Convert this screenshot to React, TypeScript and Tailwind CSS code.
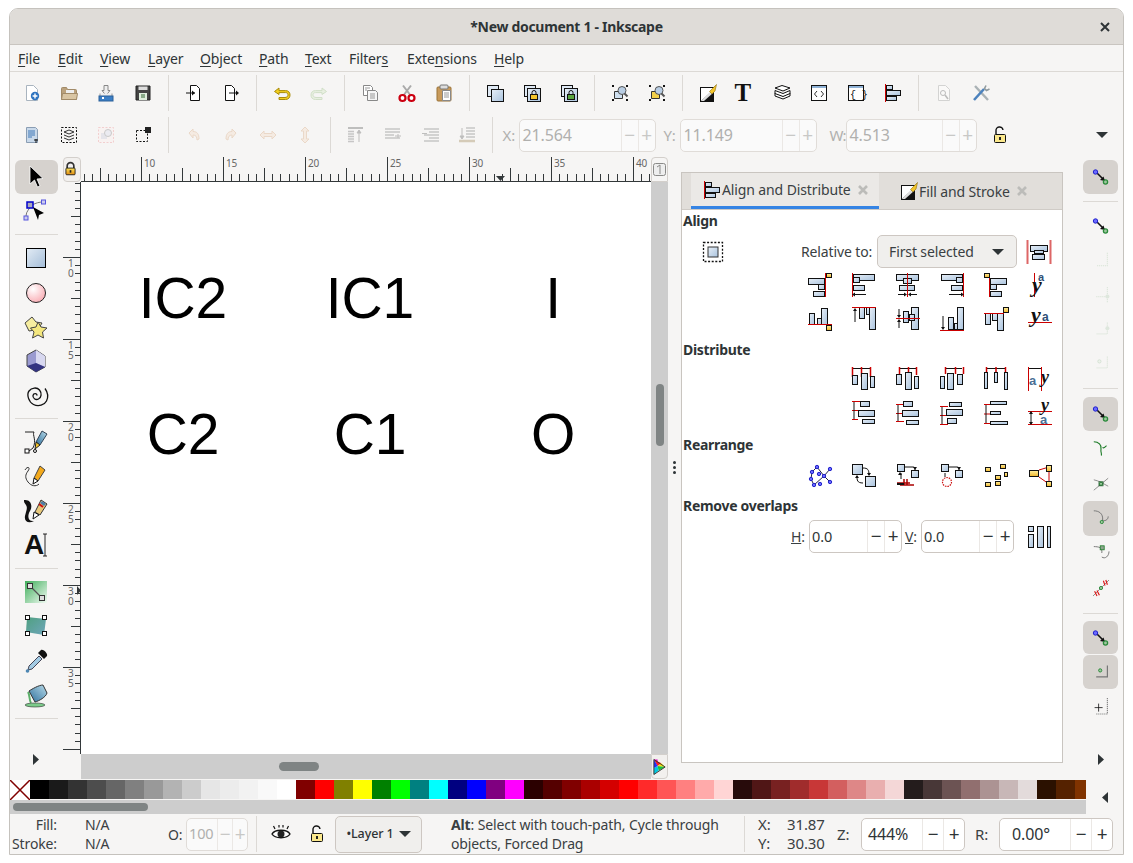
import React from "react";

const cx = (...a: string[]) => a.join(" ");
type K = { children?: React.ReactNode; s?: number; o?: number };
const S = ({ children, s = 18, o }: K) => (
  <svg width={s} height={s} viewBox={`0 0 ${s} ${s}`} opacity={o} className="block shrink-0 overflow-visible">{children}</svg>
);
const R = ({ x, y, w, h, f = "url(#gb)", st = "#111" }: { x: number; y: number; w: number; h: number; f?: string; st?: string }) => (
  <rect x={x + 0.5} y={y + 0.5} width={w - 1} height={h - 1} fill={f} stroke={st} />
);
const Red = ({ d, c = "#cc0000", w = 1 }: { d: string; c?: string; w?: number }) => <path d={d} stroke={c} strokeWidth={w} fill="none" />;
const Bl = ({ d }: { d: string }) => <path d={d} stroke="#111" fill="none" />;
const Y = ({ x, y, w = 6, h = 5 }: { x: number; y: number; w?: number; h?: number }) => <R x={x} y={y} w={w} h={h} f="url(#gy)" />;
const Tx = ({ x, y, c, z, f = "Liberation Serif", b = true, i = false, col = "#111" }: { x: number; y: number; c: string; z: number; f?: string; b?: boolean; i?: boolean; col?: string }) => (
  <text x={x} y={y} fontFamily={`'${f}', serif`} fontSize={z} fontWeight={b ? 700 : 400} fontStyle={i ? "italic" : "normal"} fill={col}>{c}</text>
);
const Head = ({ x, y, dir }: { x: number; y: number; dir: "l" | "r" | "u" | "d" }) => {
  const m = { l: `M${x} ${y}l3-2v4z`, r: `M${x} ${y}l-3-2v4z`, u: `M${x} ${y}l-2 3h4z`, d: `M${x} ${y}l-2-3h4z` };
  return <path d={m[dir]} fill="#111" />;
};

/* ---------- top toolbar icons ---------- */
const Page = ({ f = "#fff", st = "#999" }: { f?: string; st?: string }) => <path d="M3.5 1.5h7l4 4v11h-11z" fill={f} stroke={st} />;
const Lock = ({ s = 18, open = false }: { s?: number; open?: boolean }) => (
  <S s={18}>
    <g transform={`scale(${s / 18})`}>
      {open ? <path d="M5 8V5a3.5 3.5 0 0 1 7-1" fill="none" stroke="#111" strokeWidth="1.4" /> : <path d="M5 9V6a4 4 0 0 1 8 0v3" fill="none" stroke="#333" strokeWidth="2" />}
      <rect x="3.5" y="8.5" width="11" height="8" rx="1" fill={open ? "#fbe88c" : "url(#gl)"} stroke="#111" />
      <rect x="8" y="11" width="2" height="3" fill="#222" />
    </g>
  </S>
);
const I = {
  new: <S><Page st="#a9b4bf" /><circle cx="12" cy="12" r="4.2" fill="#2f74c0" /><path d="M12 9.6v4.8M9.6 12h4.8" stroke="#fff" strokeWidth="1.4" /></S>,
  open: <S><path d="M1.5 4.5a1 1 0 0 1 1-1h4l1 2h8a1 1 0 0 1 1 1v9h-15z" fill="#bba27d" stroke="#a18a68" /><rect x="6" y="6" width="8" height="3" fill="#eee" /><path d="M1.5 15.5l1-6h15l-1 6z" fill="#d9c5a3" stroke="#a18a68" /></S>,
  imp: <S><path d="M7 1.5h4v5h2l-4 5-4-5h2z" fill="#eee" stroke="#888" /><path d="M3 9.5v3h12v-3" fill="#eee" stroke="#999" /><rect x="2" y="12" width="14" height="5" fill="#3b7fc6" stroke="#2b6099" /><rect x="5" y="13" width="2" height="2" fill="#fff" /></S>,
  save: <S><path d="M2 2h14v14H2z" fill="#444" stroke="#222" /><rect x="4.5" y="2.5" width="9" height="3.5" fill="#ddd" /><rect x="5" y="9" width="8" height="7" fill="#dfeedd" /><rect x="7" y="10" width="4" height="4" fill="#8a8" /></S>,
  pin: <S><path d="M5.5 1.5h6l3 3v12h-9z" fill="#fff" stroke="#111" /><path d="M1 9h9" stroke="#111" /><path d="M10 9l-3-2.5v5z" fill="#111" /></S>,
  pout: <S><path d="M3.5 1.5h6l3 3v12h-9z" fill="#fff" stroke="#111" /><path d="M7 9h9" stroke="#111" /><path d="M17 9l-3-2.5v5z" fill="#111" /></S>,
  undo: <S><path d="M6 4L1.5 7.5 6 10.5V8.6h6.5c2 0 2.5 1.3 2.5 2.4S14 13.5 12 13.5H6V15.5h6.5c3 0 4.5-2 4.5-4.5s-1.5-4.4-4.5-4.4H6z" fill="#f2cf1e" stroke="#a88a08" /></S>,
  redo: <S o={0.35}><path d="M12 4l4.5 3.5L12 10.5V8.6H5.5C3.5 8.6 3 9.9 3 11s1 2.5 3 2.5h6v2H5.5c-3 0-4.5-2-4.5-4.5s1.500-4.4 4.5-4.4H12z" fill="#cfe6bd" stroke="#8eb978" /></S>,
  copy: <S><path d="M2.500 1.500h7l2 2v8h-9z" fill="#fff" stroke="#888" /><path d="M6.500 6.500h8l2 2v8h-10z" fill="#f6f6f6" stroke="#888" /><path d="M4 4h5M4 6h2M9 10h5M9 12h5M9 14h5" stroke="#999" /></S>,
  cut: <S><path d="M5 12L13 1.500M13 12L5 1.500" stroke="#aaa" strokeWidth="2" /><circle cx="4.500" cy="14" r="3" fill="#fff" stroke="#c01" strokeWidth="2.200" /><circle cx="13.500" cy="14" r="3" fill="#fff" stroke="#c01" strokeWidth="2.200" /></S>,
  paste: <S><rect x="2" y="3" width="14" height="14" rx="1" fill="#c89a5b" stroke="#9a7237" /><rect x="5" y="1" width="8" height="4" rx="1" fill="#ddd" stroke="#777" /><path d="M7.500 6.500h8v10h-8z" fill="#fff" stroke="#888" /><path d="M9 9h5M9 11h5M9 13h5" stroke="#999" /></S>,
  dup: <S><rect x="1.500" y="1.500" width="11" height="11" fill="#dfe9f4" stroke="#111" /><rect x="5.500" y="5.500" width="12" height="12" fill="url(#gb)" stroke="#111" /></S>,
  clone: <S><rect x="1.500" y="1.500" width="11" height="11" fill="#dfe9f4" stroke="#111" /><rect x="4.500" y="4.500" width="13" height="13" fill="url(#gb)" stroke="#111" /><path d="M9 10V8.500a2 2 0 0 1 4 0V10" stroke="#111" fill="none" /><rect x="7.500" y="10.500" width="7" height="5" fill="#f3c52b" stroke="#111" /></S>,
  unl: <S><rect x="1.500" y="1.500" width="11" height="11" fill="#dfe9f4" stroke="#111" /><rect x="4.500" y="4.500" width="13" height="13" fill="url(#gb)" stroke="#111" /><path d="M9 10V8.500a2 2 0 0 1 4 0V10" stroke="#111" fill="none" /><rect x="7.500" y="10.500" width="7" height="5" fill="#5aa53f" stroke="#111" /></S>,
  grp: (c: string) => <S><path d="M1 1h2v2H1zM15 15h2v2h-2zM1 15h2v2H1zM15 1h2v2h-2z" fill="#111" /><path d="M3.500 7.500h8v7h-8z" fill={c} stroke="#333" /><circle cx="11" cy="6.500" r="4" fill="#b9cde3" stroke="#555" /><path d="M13.500 9.500l3 3" stroke="#555" strokeWidth="2" /></S>,
  fs: <S><rect x="1.500" y="3.500" width="13" height="14" fill="#fff" stroke="#111" /><path d="M2 17L14 17V6z" fill="#111" /><path d="M2 17L12 7l2 2-9 8z" fill="#ddd" /><path d="M17.500 .5l-7 7 2.500 2.500 3-3z" fill="#f3c52b" stroke="#8a6d10" strokeWidth=".6" /></S>,
  text: <S s={18}><Tx x={-1.5} y={17} c="T" z={25} /></S>,
  layers: <S><path d="M2 9l8 3 7-3v3l-7 3-8-3z" fill="#fff" stroke="#111" /><path d="M2 6.500l8 3 7-3v3l-7 3-8-3z" fill="#fff" stroke="#111" /><path d="M2 4l7-2.500 8 2.500-7 3z" fill="#fff" stroke="#111" /></S>,
  xml: <S><rect x="1.500" y="1.500" width="15" height="15" fill="#fff" stroke="#111" /><rect x="2" y="2" width="14" height="2" fill="#8fb2d6" /><path d="M7 7L4.500 10 7 13M11 7l2.500 3L11 13" stroke="#333" fill="none" /></S>,
  css: <S><rect x="1.500" y="1.500" width="15" height="15" fill="#fff" stroke="#111" /><rect x="2" y="2" width="14" height="2" fill="#8fb2d6" /><Tx x={3} y={13.500} c="{ }" z={10} f="Liberation Mono" b={false} /></S>,
  align: <S><Red d="M1.500 0v18" /><R x={2} y={1} w={7} h={5} /><R x={2} y={6} w={15} h={6} /><R x={2} y={12} w={11} h={5} /></S>,
  dp: <S o={0.45}><path d="M3.500 1.500h7l4 4v11h-11z" fill="#fff" stroke="#aaa" /><circle cx="8" cy="9" r="2.500" fill="none" stroke="#777" /><path d="M10 11l3 4" stroke="#777" strokeWidth="1.500" /></S>,
  tools: <S><path d="M3 2l13 14" stroke="#aab2b5" strokeWidth="2.400" /><path d="M2 16L12 5" stroke="#4c82bd" strokeWidth="2.600" /><path d="M14 1.500l-1.500 3 2 2 3-1.500" stroke="#8f9a9e" strokeWidth="1.600" fill="none" /></S>,
  doc: <S><path d="M3.500 1.500h9l2 2v13h-11z" fill="#c9d9ea" stroke="#8a9db3" /><path d="M5 5h7M5 7h7M5 9h7M5 11h4" stroke="#3d77b7" /><path d="M11 14h4M13 13v4" stroke="#111" /></S>,
  selall: <S><rect x="1.500" y="1.500" width="15" height="15" fill="none" stroke="#111" strokeDasharray="2 1.500" /><path d="M4 6l5-2 5 2-5 2zM4 9l5 2 5-2M4 12l5 2 5-2" stroke="#333" fill="none" /></S>,
  selz: <S o={0.4}><rect x="1.500" y="1.500" width="15" height="15" fill="#fbeeee" stroke="#e99" strokeDasharray="2 1.500" /><path d="M4 7h6v6H4z" fill="#ccd" /><circle cx="11" cy="7" r="3.500" fill="#dde" stroke="#888" /></S>,
  sq: <S><rect x="2.500" y="4.500" width="11" height="11" fill="none" stroke="#111" strokeDasharray="2 1.500" /><rect x="11" y="1" width="6" height="6" fill="#222" /></S>,
  rotl: <S o={0.7}><path d="M4 7l4-4v2.500c4 0 6 2.500 6 7.500l-2 1c0-3-1-5-4-5V12z" fill="#f5e7db" stroke="#e6cdb6" /></S>,
  rotr: <S o={0.7}><path d="M14 7l-4-4v2.500c-4 0-6 2.500-6 7.500l2 1c0-3 1-5 4-5V12z" fill="#f5e7db" stroke="#e6cdb6" /></S>,
  flh: <S o={0.7}><path d="M1 9l4-4v2.500h8V5l4 4-4 4v-2.500H5V13z" fill="#f5e7db" stroke="#e6cdb6" /></S>,
  flv: <S o={0.7}><path d="M9 1l4 4h-2.500v8H13l-4 4-4-4h2.500V5H5z" fill="#f5e7db" stroke="#e6cdb6" /></S>,
  rtop: <S o={0.5}><path d="M1 2h15" stroke="#888" strokeWidth="2" /><path d="M1 5.500h6M1 8h6M1 10.500h6M1 13h6M1 15.500h6" stroke="#999" strokeWidth="1.500" /><path d="M12 16V5M12 4l-2 3h4z" stroke="#888" fill="#888" /></S>,
  rup: <S o={0.5}><path d="M1 3h15M1 6h15M1 9h9M1 12h15" stroke="#999" strokeWidth="1.500" /><path d="M14 12V8M11 10h6" stroke="#888" /></S>,
  rdn: <S o={0.5}><path d="M3 3h15M8 6h10M3 9h15M8 12h10M3 15h15" stroke="#999" strokeWidth="1.500" /><path d="M1 7.500h5" stroke="#888" /></S>,
  rbot: <S o={0.5}><path d="M8 2h9M8 5h9M8 8h9M8 11h9" stroke="#999" strokeWidth="1.500" /><path d="M1 15h16" stroke="#b5a27e" strokeWidth="2.500" /><path d="M4 2v10M4 13l-2-3h4z" stroke="#888" fill="#888" /></S>,
};

/* ---------- left toolbar icons ---------- */
const L = {
  sel: <S s={24}><path d="M6 1l0 18 4.500-4 3 7 2.500-1-3-7 6-.5z" fill="#000" stroke="#fff" strokeWidth=".8" /></S>,
  node: <S s={24}><path d="M7 6C6 10 2 12 2 17M8 6c4-2 7-3 11-3" fill="none" stroke="#777" /><rect x="3" y="3" width="6" height="6" fill="#aab" stroke="#00c" strokeWidth="1.500" /><rect x="17.500" y="1" width="4" height="4" fill="#cce" stroke="#55d" /><rect x="0" y="17" width="4" height="4" fill="#cce" stroke="#55d" /><path d="M9 8l11 6-5 2 -1 5z" fill="#000" /></S>,
  rect: <S s={24}><rect x="2.500" y="2.500" width="19" height="19" fill="url(#gr)" stroke="#000" strokeWidth="1" /></S>,
  circ: <S s={24}><circle cx="12" cy="12" r="9.500" fill="url(#gc)" stroke="#222" /></S>,
  star: <S s={24}><path d="M8 2L1 8l4 8 6-1 4-2 3-5-6-1z" fill="#f7eea0" stroke="#444" /><path d="M14 7l3 5 6 1-4.500 4 1 6-5.500-3-5.500 3 1.500-6-3.500-4 5.500-1z" fill="#f4e77e" stroke="#444" /></S>,
  box: <S s={24}><path d="M12 1l9 6v11l-9 5-9-6V6z" fill="#9a9ad0" stroke="#444" /><path d="M12 1l9 6v11l-9-4z" fill="#d8d8f0" /><path d="M3 17l9-3 9 4-9 5z" fill="#333380" /></S>,
  spiral: <S s={24}><path d="M13 12.500c0-2.500-3.500-2.500-4 0s2.500 5 5.500 3.500 3.500-6 1-9-8-2.500-10.500 1-.5 11 4.500 13.500 11 .5 13-3.500 1-9-1.500-12.500" fill="none" stroke="#111" strokeWidth="1.300" /></S>,
  pen: <S s={24}><path d="M1 2h9C8 5 13 10 9 18l-4 3" fill="none" stroke="#222" /><path d="M18 1l5 3-7 11-4-3z" fill="url(#gm2)" stroke="#345" /><path d="M12 12l4 3-5 4z" fill="#f3c52b" stroke="#222" /><rect x="1" y="19" width="4" height="4" fill="#fff" stroke="#111" /><circle cx="11" cy="21" r="1.500" fill="#fff" stroke="#111" /></S>,
  pencil: <S s={24}><path d="M1 5c2-4 6-3 3 1s-3 7 0 11 8 5 11 2" fill="none" stroke="#333" /><path d="M16 1l5 4-7 11-4-3z" fill="#f3a91c" stroke="#444" /><path d="M10 13l4 3-5 3z" fill="#fff" stroke="#111" /></S>,
  call: <S s={24}><path d="M0 1c7-1 9 6 6 11s-2 11 4 10c-6 3-10 0-9-5s3-8 1-11-2-3-2-5z" fill="#111" /><path d="M17 1l6 4-7 11-5-3z" fill="#e8c87a" stroke="#333" /><path d="M18 2l4 3-2 2-4-3z" fill="#4d7ea8" /><path d="M15 5l4 3" stroke="#c11" strokeWidth="2" /><path d="M10 13l5 3-6 4z" fill="#fff" stroke="#111" /></S>,
  A: <S s={24}><Tx x={0} y={21} c="A" z={28} f="Liberation Sans" /><path d="M19 1h4M21 1v22M19 23h4" stroke="#111" strokeWidth=".9" /></S>,
  grad: <S s={24}><rect x="1" y="1" width="22" height="22" fill="url(#gg)" /><path d="M6 6l12 12" stroke="#555" strokeWidth="1.200" /><rect x="3.500" y="3.500" width="5" height="5" fill="#ddd" stroke="#333" /><rect x="15.500" y="15.500" width="5" height="5" fill="#ddd" stroke="#333" /></S>,
  mesh: <S s={24}><path d="M3 3l19 2-2 16L2 18z" fill="url(#gm)" /><g fill="#fff" stroke="#111"><rect x="1.500" y="1.500" width="4" height="4" /><rect x="18.500" y="1.500" width="4" height="4" /><rect x="1.500" y="17.500" width="4" height="4" /><rect x="18.500" y="17.500" width="4" height="4" /></g></S>,
  drop: <S s={24}><path d="M15 7L5 17l-1 4 4-1 10-10z" fill="#a3cbe4" stroke="#445" /><path d="M14 4l6 6 3-3c1-2-3-7-6-6z" fill="#111" /><circle cx="3.500" cy="22" r="1.800" fill="#4d87b3" /></S>,
  bucket: <S s={24}><path d="M4 9c2 3 1 8 3 11" fill="none" stroke="#5cb06a" strokeWidth="2" /><path d="M5 8c3-2 10-6 14-6l4 8c-1 4-8 8-12 9z" fill="url(#gm2)" stroke="#333" /><ellipse cx="11" cy="22" rx="10" ry="2" fill="#7ccb8a" stroke="#333" strokeWidth=".6" /></S>,
};

/* ---------- snap icons (right toolbar) ---------- */
const Snap = ({ o }: { o?: number }) => (
  <S s={24} o={o}>
    <path d="M7 7l8 8" stroke="#111" strokeWidth="1.600" />
    <path d="M16 16l-5-1 3.500-3.500z" fill="#111" />
    <circle cx="6.500" cy="7" r="2.200" fill="#6a6aff" stroke="#2222cc" />
    <circle cx="16.500" cy="17" r="2.100" fill="#9ec79e" stroke="#2a8a3a" strokeWidth="1.300" />
  </S>
);
const Dot = ({ x, y, b = false }: { x: number; y: number; b?: boolean }) => <circle cx={x} cy={y} r={2} fill={b ? "#6a6aff" : "#9ec79e"} stroke={b ? "#2222cc" : "#2a8a3a"} strokeWidth="1.200" />;
const Sm = ({ children }: { children: React.ReactNode }) => <div className="scale-[0.8]">{children}</div>;
const Rr = {
  p1: <S s={24} o={0.3}><path d="M20 3v16H6" stroke="#a9c9a9" strokeWidth="1.500" strokeDasharray="1.500 1" fill="none" /></S>,
  p2: <S s={24} o={0.3}><path d="M20 2v20M6 14h14" stroke="#a9c9a9" strokeWidth="1.500" strokeDasharray="1.500 1" fill="none" /><circle cx="20" cy="14" r="2.500" fill="#a9c9a9" /></S>,
  p3: <S s={24} o={0.3}><path d="M20 4v14H6" stroke="#a9c9a9" strokeWidth="1.500" strokeDasharray="1.500 1" fill="none" /><circle cx="20" cy="11" r="2.500" fill="#a9c9a9" /></S>,
  p4: <S s={24} o={0.3}><path d="M20 4v14H6" stroke="#a9c9a9" strokeWidth="1.500" strokeDasharray="1.500 1" fill="none" /><circle cx="10" cy="10" r="2" fill="#dfeedd" stroke="#7a7" /></S>,
  c1: <S s={24}><path d="M3 3c6 0 10 4 9 9s2 7 0 8" fill="none" stroke="#1a7a25" strokeWidth="1.400" /><path d="M14 10c2 2 3-1 5-2" fill="none" stroke="#1a7a25" strokeWidth="1.400" /></S>,
  c2: <S s={24}><path d="M3 21L21 6M3 8c6 1 12 5 18 8" stroke="#777" fill="none" /><Dot x={12} y={13} /><rect x="9.500" y="10.500" width="5" height="5" fill="none" stroke="#1a5a25" /></S>,
  c3: <S s={24}><path d="M3 3c6 0 12 3 11 12M21 10c0 5-5 6-7 5" fill="none" stroke="#777" strokeWidth="1.200" /><Dot x={13} y={17} /></S>,
  c4: <S s={24}><path d="M3 4c6 0 11 1 10 8M22 10c0 6-5 10-9 7" fill="none" stroke="#777" strokeWidth="1.200" /><rect x="10" y="2" width="5" height="5" fill="#8fa58f" stroke="#1a7a25" transform="translate(1 1)" /></S>,
  c5: <S s={24}><path d="M2 22L22 2" stroke="#777" /><path d="M4 16l3 6M7 15l3 6M15 3l2 6M18 2l2 6" stroke="#d11" strokeWidth="1.400" /><Dot x={12} y={12} /></S>,
  b1: <S s={24}><path d="M20 4v14H6" stroke="#777" strokeWidth="1.500" fill="none" /><Dot x={11} y={10} /></S>,
  b2: <S s={24}><path d="M20 2v20H6" stroke="#888" strokeWidth="1.500" strokeDasharray="1.500 1" fill="none" /><path d="M4 14h10M9 9v10" stroke="#111" /></S>,
};

/* ---------- Align panel icons ---------- */
const A1 = {
  a: <S s={24}><R x={0} y={5} w={17} h={7} /><R x={10} y={11} w={7} h={6} /><R x={5} y={18} w={12} h={6} /><Red d="M17.500 0v24" /><Y x={18} y={0} /></S>,
  b: <S s={24}><R x={1} y={1} w={22} h={7} /><R x={1} y={4} w={7} h={6} /><R x={1} y={12} w={12} h={6} /><Red d="M.5 0v24" /><Bl d="M2 21.500h12" /><Head x={0} y={21.500} dir="l" /></S>,
  c: <S s={24}><R x={0} y={1} w={23} h={7} /><R x={7} y={5} w={9} h={6} /><R x={3} y={12} w={16} h={6} /><Red d="M11.500 0v24" /><Bl d="M2 21.500h7M14 21.500h7" /><Head x={11} y={21.500} dir="r" /><Head x={12} y={21.500} dir="l" /></S>,
  d: <S s={24}><R x={1} y={1} w={22} h={7} /><R x={16} y={4} w={7} h={6} /><R x={11} y={12} w={12} h={6} /><Red d="M23.500 0v24" /><Bl d="M9 21.500h12" /><Head x={24} y={21.500} dir="r" /></S>,
  e: <S s={24}><R x={6} y={5} w={17} h={7} /><R x={6} y={11} w={7} h={6} /><R x={6} y={18} w={12} h={6} /><Red d="M5.500 0v24" /><Y x={0} y={0} /></S>,
  f: <S s={24}><Red d="M6.500 0v24" /><Tx x={10} y={8} c="a" z={11} f="Liberation Sans" col="#2f4f77" /><Tx x={4} y={19} c="y" z={22} i /></S>,
  g: <S s={24}><R x={1} y={6} w={6} h={12} /><R x={9} y={11} w={6} h={7} /><R x={13} y={1} w={7} h={17} /><Red d="M0 17.500h24" /><Y x={18} y={18} w={6} h={6} /></S>,
  h: <S s={24}><R x={7} y={0} w={6} h={12} /><R x={14} y={0} w={6} h={8} /><R x={17} y={0} w={7} h={23} /><Red d="M0 .5h24" /><Bl d="M3 3v12" /><Head x={3} y={1} dir="u" /></S>,
  i: <S s={24}><R x={7} y={4} w={6} h={12} /><R x={15} y={0} w={8} h={23} /><R x={13} y={7} w={6} h={7} /><Red d="M0 11.500h24" /><Bl d="M3 2v7M3 14v7" /><Head x={3} y={11} dir="d" /><Head x={3} y={12} dir="u" /></S>,
  j: <S s={24}><R x={8} y={10} w={6} h={13} /><R x={14} y={16} w={7} h={7} /><R x={17} y={0} w={7} h={23} /><Red d="M0 23.500h24" /><Bl d="M3 9v12" /><Head x={3} y={23} dir="d" /></S>,
  k: <S s={24}><R x={1} y={6} w={6} h={12} /><R x={8} y={6} w={7} h={8} /><R x={13} y={6} w={7} h={18} /><Red d="M0 6.500h20" /><Y x={19} y={0} w={6} h={6} /></S>,
  l: <S s={24}><Red d="M0 15.500h24" /><Tx x={3} y={15} c="y" z={22} i /><Tx x={14} y={14} c="a" z={12} f="Liberation Sans" col="#2f4f77" /></S>,
};
const tickBar = (a: number, b: number) => <><Bl d={`M${a} 1.500h${b - a}`} /></>;
const D1 = {
  a: <S s={24}>{tickBar(1, 18)}<Red d="M.5 0v10M9.500 0v10M18.500 0v10" w={1.500} /><R x={0} y={8} w={6} h={10} /><R x={9} y={6} w={7} h={17} /><R x={18} y={9} w={5} h={12} /></S>,
  b: <S s={24}>{tickBar(4, 20)}<Red d="M3.500 0v8M12.500 0v8M20.500 0v8" w={1.500} /><R x={0} y={7} w={6} h={11} /><R x={9} y={5} w={7} h={18} /><R x={18} y={9} w={5} h={13} /></S>,
  c: <S s={24}>{tickBar(6, 22)}<Red d="M5.500 0v7M15.500 0v7M23.500 0v7" w={1.500} /><R x={0} y={9} w={5} h={13} /><R x={7} y={6} w={7} h={17} /><R x={17} y={7} w={6} h={11} /></S>,
  d: <S s={24}>{tickBar(3, 21)}<Red d="M2.500 0v5M12 0v5M21.500 0v5" w={1.500} /><R x={0} y={5} w={4} h={17} /><R x={10} y={5} w={4} h={11} /><R x={20} y={5} w={4} h={18} /></S>,
  e: <S s={24}><Bl d="M1 1.500h12" /><Red d="M.5 0v24M13.500 0v24" /><Tx x={1} y={18} c="a" z={13} f="Liberation Sans" col="#4a6f96" /><Tx x={13} y={16} c="y" z={18} i /></S>,
  f: <S s={24}><Red d="M0 .5h8M0 9.500h8M0 18.500h6" w={1.200} /><Bl d="M2 1v17" /><R x={8} y={0} w={10} h={6} /><R x={6} y={9} w={17} h={7} /><R x={10} y={18} w={13} h={5} /></S>,
  g: <S s={24}><Red d="M0 3.500h8M0 12.500h8M0 20.500h8" w={1.200} /><Bl d="M2 4v16" /><R x={7} y={0} w={10} h={6} /><R x={6} y={9} w={17} h={7} /><R x={10} y={19} w={13} h={5} /></S>,
  h: <S s={24}><Red d="M0 5.500h8M0 14.500h8M0 23.500h8" w={1.200} /><Bl d="M2 6v17" /><R x={9} y={1} w={13} h={5} /><R x={6} y={8} w={17} h={7} /><R x={7} y={17} w={10} h={6} /></S>,
  i: <S s={24}><Red d="M0 3.500h6M0 13h6M0 22.500h6" w={1.200} /><Bl d="M2 4v18" /><R x={6} y={0} w={17} h={4} /><R x={6} y={10} w={11} h={4} /><R x={6} y={20} w={18} h={4} /></S>,
  j: <S s={24}><Red d="M0 10.500h24M0 23.500h24" /><Bl d="M3 11v12" /><Head x={3} y={10} dir="u" /><Head x={3} y={24} dir="d" /><Tx x={13} y={10} c="y" z={18} i /><Tx x={12} y={23} c="a" z={13} f="Liberation Sans" col="#4a6f96" /></S>,
};
const Q = ({ x, y, s = 10 }: { x: number; y: number; s?: number }) => <R x={x} y={y} w={s} h={s} />;
const E1 = {
  a: <S s={24}><path d="M4 8L9 3l7 9-10 9-3-6zM16 12l6-7M16 12l6 6" fill="none" stroke="#224" /><g fill="#6a6aff" stroke="#2222cc">{[[9, 3], [4, 8], [3, 15], [6, 21], [12, 20], [16, 12], [11, 10], [22, 5], [22, 18]].map(([x, y], i) => <circle key={i} cx={x} cy={y} r="1.700" />)}</g></S>,
  b: <S s={24}><Q x={0} y={0} s={11} /><Q x={13} y={12} s={11} /><path d="M11 4c5 0 6 2 6 7M11 19c-6 0-6-3-6-7" fill="none" stroke="#111" /><Head x={17} y={12} dir="d" /><Head x={5} y={11} dir="u" /></S>,
  c: <S s={24}><Q x={1} y={0} s={8} /><Q x={15} y={6} s={8} /><path d="M9 3h8c2 0 2 1 2 3" fill="none" stroke="#111" /><Head x={19} y={6} dir="d" /><Head x={4} y={8} dir="u" /><path d="M5 9v6" stroke="#111" /><path d="M1 19h13M4 21h14M8 15v6M11 15v6" stroke="#a00" strokeWidth="1.500" /><path d="M1 20h7" stroke="#111" strokeWidth="2" /></S>,
  d: <S s={24}><Q x={1} y={0} s={8} /><Q x={15} y={6} s={8} /><path d="M9 3h8c2 0 2 1 2 3" fill="none" stroke="#111" /><Head x={19} y={6} dir="d" /><circle cx="7" cy="18" r="4.500" fill="none" stroke="#c11" strokeDasharray="1.500 1" strokeWidth="1.200" /><path d="M5 9v4" stroke="#111" /></S>,
  e: <S s={24}><Y x={1} y={3} w={6} h={5} /><Y x={16} y={0} w={6} h={5} /><Y x={11} y={11} w={6} h={5} /><Y x={20} y={8} w={4} h={5} /><Y x={1} y={18} w={6} h={5} /><Y x={11} y={17} w={6} h={5} /></S>,
  f: <S s={24}><Red d="M11 6l10-3M11 13l10 7M21 7v11" /><Y x={1} y={6} w={10} h={7} /><Y x={18} y={1} w={6} h={7} /><Y x={18} y={17} w={6} h={6} /></S>,
  rm: <S s={24}><R x={1} y={1} w={6} h={6} /><R x={1} y={9} w={6} h={14} /><R x={10} y={1} w={7} h={22} /><R x={20} y={1} w={4} h={22} /></S>,
  sel: <S s={24}><rect x="2.500" y="2.500" width="19" height="19" fill="none" stroke="#111" strokeWidth="1.300" strokeDasharray="2 1.600" /><rect x="7" y="7" width="10" height="10" fill="url(#gb)" stroke="#333" /></S>,
  rel: <S s={24}><path d="M.5 0v24M23.500 0v24" stroke="#d66" strokeWidth="2" /><R x={3} y={5} w={18} h={7} /><R x={7} y={10} w={10} h={4} /><R x={5} y={14} w={13} h={6} /></S>,
  eye: <S s={22}><path d="M2 11c3-5 15-5 18 0-3 5-15 5-18 0z" fill="#fff" stroke="#111" strokeWidth="1.400" /><circle cx="11" cy="11" r="3.500" fill="#222" /><path d="M5 6L3.500 3M9 4.500V2M13 4.500V2M17 6l1.500-3" stroke="#111" strokeWidth="1.200" /></S>,
};

const X = () => <svg width="12" height="12" viewBox="0 0 12 12" className="shrink-0"><path d="M2 2l8 8M10 2l-8 8" stroke="#bcbcb9" strokeWidth="2.600" /></svg>;
const Tri = () => <svg width="12" height="6" viewBox="0 0 12 6" className="shrink-0"><path d="M0 0h12L6 6z" fill="#2e3436" /></svg>;

/* ---------- rulers ---------- */
const TopRuler = () => {
  const xs: React.ReactNode[] = [];
  for (let i = -7; i <= 70; i++) {
    const x = 141 - 81 + i * 8.2;
    if (x < 0 || x > 570) continue;
    const px = Math.round(x) + 0.5;
    const h = i % 10 === 0 ? 24 : i % 5 === 0 ? 13 : 7;
    xs.push(<path key={i} d={`M${px} 24V${24 - h}`} stroke="#33383a" />);
  }
  const labels = [10, 15, 20, 25, 30, 35, 40];
  return (
    <svg width="570" height="25" viewBox="0 0 570 25" className="block">
      {xs}
      {labels.map((l, i) => <text key={l} x={60 + i * 82 + 3} y={9.500} fontSize="10" fill="#666" fontFamily="'Noto Sans', sans-serif">{l}</text>)}
      <path d="M0 24.500h570" stroke="#33383a" />
      <path d="M415 19h9l-4.500 5z" fill="#33383a" />
    </svg>
  );
};
const LeftRuler = () => {
  const ys: React.ReactNode[] = [];
  for (let i = -10; i <= 60; i++) {
    const y = 256 - 181 + i * 8.2;
    if (y < 0 || y > 572) continue;
    const py = Math.round(y) + 0.5;
    const h = i % 10 === 0 ? 18 : i % 5 === 0 ? 10 : 6;
    ys.push(<path key={i} d={`M19 ${py}H${19 - h}`} stroke="#33383a" />);
  }
  const labels = ["10", "15", "20", "25", "30", "35"];
  return (
    <svg width="19" height="572" viewBox="0 0 19 572" className="block">
      {ys}
      <path d="M18.500 0v572" stroke="#33383a" />
      {labels.map((l, i) => (
        <g key={l} fill="#666" fontSize="10" fontFamily="'Noto Sans', sans-serif">
          <text x={6} y={75 + i * 82 + 10}>{l[0]}</text>
          <text x={6} y={75 + i * 82 + 20}>{l[1]}</text>
        </g>
      ))}
      <path d="M15 404v9l4-4.500z" fill="#33383a" />
    </svg>
  );
};

const Sep = () => <div className="w-[14px] h-full flex items-center justify-center"><div className="w-px h-[36px] bg-[#dcd9d5]" /></div>;
const TB = ({ children }: { children: React.ReactNode }) => <div className="w-[37px] h-full flex items-center justify-center shrink-0">{children}</div>;

const Spin = ({ v, w, disabled = false, btn = "w-[17px]", txt = "text-[14.5px] pl-[2px]" }: { v: string; w: string; disabled?: boolean; btn?: string; txt?: string }) => (
  <div className={cx("flex h-[33px] rounded-[5px] border shrink-0 overflow-hidden", w, disabled ? "border-[#e0dcd8] bg-[#fafafa] text-[#b0b0ae]" : "border-[#cdc7c2] bg-white text-[#2e3436]")}>
    <div className={cx("flex-1 flex items-center", txt)}>{v}</div>
    {["−", "+"].map(c => (
      <div key={c} className={cx("flex items-center justify-center border-l text-[19px] leading-none shrink-0", btn, disabled ? "border-[#ebe8e5] text-[#c8c8c6]" : "border-[#ebe8e5] text-[#2e3436]")}>{c}</div>
    ))}
  </div>
);

const GRAYS = ["#000000", "#1a1a1a", "#333333", "#4d4d4d", "#666666", "#808080", "#999999", "#b3b3b3", "#cccccc", "#e6e6e6", "#ececec", "#f2f2f2", "#f9f9f9", "#ffffff", "#800000", "#ff0000", "#808000", "#ffff00", "#008000", "#00ff00", "#008080", "#00ffff", "#000080", "#0000ff", "#800080", "#ff00ff", "#2b0000", "#550000", "#800000", "#aa0000", "#d40000", "#ff0000", "#ff2a2a", "#ff5555", "#ff8080", "#ffaaaa", "#ffd5d5", "#280b0b", "#501616", "#782121", "#a02c2c", "#c83737", "#d35f5f", "#de8787", "#e9afaf", "#f4d7d7", "#241c1c", "#483737", "#6c5353", "#916f6f", "#ac9393", "#c8b7b7", "#e3dbdb", "#2b1100", "#552200", "#803300"];

const MENU: [string, string, string, string][] = [
  ["", "F", "ile", "w-[40px]"], ["", "E", "dit", "w-[42px]"], ["", "V", "iew", "w-[48px]"], ["", "L", "ayer", "w-[52px]"], ["", "O", "bject", "w-[59px]"],
  ["", "P", "ath", "w-[46px]"], ["", "T", "ext", "w-[44px]"], ["Filter", "s", "", "w-[58px]"], ["Exte", "n", "sions", "w-[87px]"], ["", "H", "elp", "w-[40px]"],
];

const Tool = ({ active, h = "h-[34.2px]", children }: { active?: boolean; h?: string; children: React.ReactNode }) => (
  <div className={cx("flex items-center justify-center w-[43px] shrink-0 rounded-[6px]", h, active ? "bg-[#d6d2ce]" : "")}>{children}</div>
);
const VS = ({ h }: { h: string }) => <div className={cx("w-[43px] flex items-center shrink-0", h)}><div className="h-px w-full bg-[#dcd9d5]" /></div>;
const Rt = ({ active, h = "h-[34.2px]", children }: { active?: boolean; h?: string; children: React.ReactNode }) => (
  <div className={cx("flex items-center justify-center w-[35px] shrink-0 rounded-[6px]", h, active ? "bg-[#d6d2ce]" : "")}>{children}</div>
);
const Vr = ({ h }: { h: string }) => <div className={cx("w-[35px] flex items-center shrink-0", h)}><div className="h-px w-full bg-[#dcd9d5]" /></div>;

const Cell = ({ children }: { children?: React.ReactNode }) => <div className="w-[44px] flex justify-center">{children}</div>;
const Head6 = ({ children, className }: { children: string; className: string }) => <div className={cx("pl-[1px] font-bold leading-[20px] tracking-[-0.3px]", className)}>{children}</div>;

const CanvasWord = ({ t, c }: { t: string; c: string }) => <span className={cx("absolute -translate-x-1/2 -translate-y-1/2 leading-none text-black text-[57px]", c)} style={{ fontFamily: "'Liberation Sans', sans-serif" }}>{t}</span>;

const SECT = ["#ff2020", "#ffe000", "#20c040", "#00c8e0", "#2030ff", "#e000c0"];

export default function App() {
  return (
    <div className="w-[1133px] h-[863px] bg-white pt-2 pl-[9px] overflow-hidden text-[14px] tracking-[-0.12px] text-[#2e3436]" style={{ fontFamily: "'Noto Sans', sans-serif" }}>
      <svg width="0" height="0" className="absolute">
        <defs>
          <linearGradient id="gb" x1="0" y1="0" x2="1" y2="1"><stop offset="0" stopColor="#e8eff7" /><stop offset="1" stopColor="#a9c3de" /></linearGradient>
          <linearGradient id="gy" x1="0" y1="0" x2="0" y2="1"><stop offset="0" stopColor="#fff0a0" /><stop offset="1" stopColor="#f0b428" /></linearGradient>
          <linearGradient id="gl" x1="0" y1="0" x2="0" y2="1"><stop offset="0" stopColor="#fbe35a" /><stop offset="1" stopColor="#e08a10" /></linearGradient>
          <linearGradient id="gr" x1="0" y1="0" x2="1" y2="1"><stop offset="0" stopColor="#e3ecf5" /><stop offset="1" stopColor="#a4bdd8" /></linearGradient>
          <radialGradient id="gc" cx=".35" cy=".3" r=".8"><stop offset="0" stopColor="#fff" /><stop offset="1" stopColor="#f9a8b0" /></radialGradient>
          <linearGradient id="gg" x1="0" y1="0" x2="1" y2="1"><stop offset="0" stopColor="#3fae5a" /><stop offset="1" stopColor="#f2faf3" /></linearGradient>
          <linearGradient id="gm" x1="0" y1="0" x2="1" y2="1"><stop offset="0" stopColor="#4fa080" /><stop offset="1" stopColor="#6fa6bb" /></linearGradient>
          <linearGradient id="gm2" x1="1" y1="0" x2="0" y2="1"><stop offset="0" stopColor="#b9dbe9" /><stop offset="1" stopColor="#2d6f9c" /></linearGradient>
        </defs>
      </svg>

      <div className="w-[1115px] h-[847px] flex flex-col border border-[#c5c2bd] rounded-t-[9px] overflow-hidden bg-[#f6f5f4]">
        {/* title bar */}
        <div className="relative h-[36px] shrink-0 bg-[#dfdcd8] border-b border-[#c9c5c0] flex items-center justify-center font-bold text-[#2e3436]">
          <span className="text-[14px] tracking-[-0.3px]">*New document 1 - Inkscape</span>
          <svg width="10" height="10" viewBox="0 0 10 10" className="absolute right-[13px] top-[13px]"><path d="M1 1l8 8M9 1l-8 8" stroke="#2e3436" strokeWidth="2" /></svg>
        </div>
        {/* menu */}
        <div className="h-[27px] shrink-0 border-b border-[#dcd9d5] flex items-center pl-2 text-[#2e3436]">
          {MENU.map(([a, u, b, w]) => <div key={u + b} className={cx("shrink-0", w)}>{a}<span className="underline underline-offset-2">{u}</span>{b}</div>)}
        </div>
        {/* toolbar 1 */}
        <div className="h-[45px] shrink-0 flex items-center pl-[3.5px] pb-[4px]">
          <TB>{I.new}</TB><TB>{I.open}</TB><TB>{I.imp}</TB><TB>{I.save}</TB><Sep />
          <TB>{I.pin}</TB><TB>{I.pout}</TB><Sep />
          <TB>{I.undo}</TB><TB>{I.redo}</TB><Sep />
          <TB>{I.copy}</TB><TB>{I.cut}</TB><TB>{I.paste}</TB><Sep />
          <TB>{I.dup}</TB><TB>{I.clone}</TB><TB>{I.unl}</TB><Sep />
          <TB>{I.grp("#cfe0f0")}</TB><TB>{I.grp("#f3d04a")}</TB><Sep />
          <TB>{I.fs}</TB><TB>{I.text}</TB><TB>{I.layers}</TB><TB>{I.xml}</TB><TB>{I.css}</TB><TB>{I.align}</TB><Sep />
          <TB>{I.dp}</TB><TB>{I.tools}</TB>
        </div>
        {/* toolbar 2 */}
        <div className="h-[40px] shrink-0 flex items-center pl-[3.5px] pb-[4px]">
          <TB>{I.doc}</TB><TB>{I.selall}</TB><TB>{I.selz}</TB><TB>{I.sq}</TB><Sep />
          <TB>{I.rotl}</TB><TB>{I.rotr}</TB><TB>{I.flh}</TB><TB>{I.flv}</TB><Sep />
          <TB>{I.rtop}</TB><TB>{I.rup}</TB><TB>{I.rdn}</TB><TB>{I.rbot}</TB><Sep />
          <span className="text-[#b0b0ae] ml-[3px] w-[16px] shrink-0 text-[15px]">X:</span>
          <Spin v="21.564" w="w-[137px]" disabled txt="text-[16px] pl-[3px]" />
          <span className="text-[#b0b0ae] ml-[8px] w-[16px] shrink-0 text-[15px]">Y:</span>
          <Spin v="11.149" w="w-[137px]" disabled txt="text-[16px] pl-[3px]" />
          <span className="text-[#b0b0ae] ml-[13px] w-[16px] shrink-0 tracking-[-1px] text-[15px]">W:</span>
          <Spin v="4.513" w="w-[131px]" disabled txt="text-[16px] pl-[3px]" />
          <div className="ml-[14px]"><Lock open /></div>
          <div className="ml-[87px]"><Tri /></div>
        </div>

        {/* main */}
        <div className="h-[622px] shrink-0 flex">
          <div className="w-[52px] shrink-0 flex flex-col items-center pt-[3px] pl-[2px] pr-[2px]">
            <Tool active>{L.sel}</Tool><Tool>{L.node}</Tool><VS h="h-[13px]" />
            <Tool>{L.rect}</Tool><Tool>{L.circ}</Tool><Tool>{L.star}</Tool><Tool>{L.box}</Tool><Tool>{L.spiral}</Tool><VS h="h-[13px]" />
            <Tool>{L.pen}</Tool><Tool>{L.pencil}</Tool><Tool>{L.call}</Tool><Tool>{L.A}</Tool><VS h="h-[13px]" />
            <Tool>{L.grad}</Tool><Tool>{L.mesh}</Tool><Tool>{L.drop}</Tool><Tool>{L.bucket}</Tool><VS h="h-[13px]" />
            <div className="mt-[29px]"><svg width="6" height="11" viewBox="0 0 6 11"><path d="M0 0l6 5.500L0 11z" fill="#2e3436" /></svg></div>
          </div>

          <div className="w-[606px] shrink-0 grid grid-cols-[19px_570px_17px] grid-rows-[25px_572px_25px]">
            <div className="relative z-10 flex items-start justify-center">
              <div className="w-[18px] h-[25px] rounded-[4px] border border-[#d3cfcb] bg-[#f2f0ee] flex items-center justify-center"><Lock s={15} /></div>
            </div>
            <TopRuler />
            <div className="bg-[#f6f5f4] rounded-t-[4px] border border-[#d3cfcb] flex items-center justify-center">
              <svg width="13" height="13" viewBox="0 0 13 13"><rect x=".5" y=".5" width="12" height="12" rx="2" fill="#eee" stroke="#8a8a88" /><path d="M4 4l3-2v9" fill="none" stroke="#8a8a88" /></svg>
            </div>
            <LeftRuler />
            <div className="bg-white relative">
              <CanvasWord t="IC2" c="left-[102px] top-[116px]" />
              <CanvasWord t="IC1" c="left-[289px] top-[116px]" />
              <CanvasWord t="I" c="left-[472px] top-[116px]" />
              <CanvasWord t="C2" c="left-[102px] top-[252px]" />
              <CanvasWord t="C1" c="left-[289px] top-[252px]" />
              <CanvasWord t="O" c="left-[472px] top-[252px]" />
            </div>
            <div className="bg-[#cdcdcd] flex flex-col items-center pt-[202px]"><div className="w-[8px] h-[62px] rounded-full bg-[#7f8484]" /></div>
            <div />
            <div className="bg-[#cdcdcd] flex items-center pl-[198px]"><div className="w-[40px] h-[9px] rounded-full bg-[#7f8484]" /></div>
            <div className="rounded-b-[4px] border border-[#d3cfcb] bg-[#f2f0ee] flex items-center justify-center">
              <svg width="16" height="18" viewBox="0 0 16 18">
                <g>
                  <path d="M2 1L6 8V1z" fill={SECT[5]} /><path d="M2 1l4 7 4-3z" fill={SECT[0]} /><path d="M10 5L6 8l8 1z" fill={SECT[1]} />
                  <path d="M14 9L6 8l1 5z" fill={SECT[2]} /><path d="M7 13L6 8 2 10v7z" fill={SECT[3]} /><path d="M2 1v9l4-2z" fill={SECT[4]} />
                  <path d="M2 1l12 8-12 8z" fill="none" stroke="#333" />
                </g>
              </svg>
            </div>
          </div>

          <div className="w-[13px] shrink-0 flex flex-col items-center justify-start pt-[304px] gap-[2px]">
            <i className="w-[3px] h-[3px] rounded-full bg-[#2e3436]" /><i className="w-[3px] h-[3px] rounded-full bg-[#2e3436]" /><i className="w-[3px] h-[3px] rounded-full bg-[#2e3436]" />
          </div>

          {/* dock panel */}
          <div className="w-[382px] h-[591px] mt-[15px] shrink-0 border border-[#c9c5c0] bg-white flex flex-col">
            <div className="h-[37px] shrink-0 bg-[#e1deda] border-b border-[#cfcbc6] flex pl-[9px]">
              <div className="w-[188px] h-full bg-[#ebe9e6] border-b-[3px] border-[#3584e4] flex items-center pl-[12px] gap-[1px]">{I.align}<span className="text-[#3a4042] mr-[5px]">Align and Distribute</span><X /></div>
              <div className="flex items-center pl-[21px] gap-[1px]">{I.fs}<span className="text-[#3a4042] mr-[5px]">Fill and Stroke</span><X /></div>
            </div>
            <Head6 className="mt-[1px]">Align</Head6>
            <div className="h-[37px] flex items-center relative mt-[2px]">
              <div className="ml-[19px]">{E1.sel}</div>
              <span className="ml-[76px] w-[76px] shrink-0 text-[#3a4042]">Relative to:</span>
              <div className="w-[140px] h-[33px] shrink-0 rounded-[5px] border border-[#cdc7c2] bg-[#f0efed] flex items-center justify-between pl-[11px] pr-[12px] text-[#3a4042]">First selected <Tri /></div>
              <div className="ml-[10px]">{E1.rel}</div>
            </div>
            <div className="flex justify-end mt-[3px]">
              <Cell>{A1.a}</Cell><Cell>{A1.b}</Cell><Cell>{A1.c}</Cell><Cell>{A1.d}</Cell><Cell>{A1.e}</Cell><Cell>{A1.f}</Cell>
            </div>
            <div className="flex justify-end mt-[10px]">
              <Cell>{A1.g}</Cell><Cell>{A1.h}</Cell><Cell>{A1.i}</Cell><Cell>{A1.j}</Cell><Cell>{A1.k}</Cell><Cell>{A1.l}</Cell>
            </div>
            <Head6 className="mt-[9px]">Distribute</Head6>
            <div className="flex justify-end mt-[7px]">
              <Cell>{D1.a}</Cell><Cell>{D1.b}</Cell><Cell>{D1.c}</Cell><Cell>{D1.d}</Cell><Cell>{D1.e}</Cell>
            </div>
            <div className="flex justify-end mt-[10px]">
              <Cell>{D1.f}</Cell><Cell>{D1.g}</Cell><Cell>{D1.h}</Cell><Cell>{D1.i}</Cell><Cell>{D1.j}</Cell>
            </div>
            <Head6 className="mt-[10px]">Rearrange</Head6>
            <div className="flex justify-end mt-[9px]">
              <Cell>{E1.a}</Cell><Cell>{E1.b}</Cell><Cell>{E1.c}</Cell><Cell>{E1.d}</Cell><Cell>{E1.e}</Cell><Cell>{E1.f}</Cell>
            </div>
            <Head6 className="mt-[8px]">Remove overlaps</Head6>
            <div className="flex items-center mt-[4px]">
              <span className="ml-[109px] w-[18px] shrink-0 text-[#3a4042]"><u>H</u>:</span>
              <Spin v="0.0" w="w-[93px]" />
              <span className="ml-[3px] w-[16px] shrink-0 text-[#3a4042]"><u>V</u>:</span>
              <Spin v="0.0" w="w-[93px]" />
              <div className="ml-[13px]">{E1.rm}</div>
            </div>
          </div>

          {/* right toolbar */}
          <div className="w-[60px] shrink-0 flex flex-col items-end pr-[5px] pt-[3px]">
            <Rt active><Snap /></Rt><Vr h="h-[15px]" />
            <Rt><Snap /></Rt><Rt><Sm>{Rr.p1}</Sm></Rt><Rt><Sm>{Rr.p2}</Sm></Rt><Rt><Sm>{Rr.p3}</Sm></Rt><Rt><Sm>{Rr.p4}</Sm></Rt><Vr h="h-[17px]" />
            <Rt active h="h-[34px]"><Snap /></Rt><Rt h="h-[34.8px]"><Sm>{Rr.c1}</Sm></Rt><Rt h="h-[34.8px]"><Sm>{Rr.c2}</Sm></Rt><Rt active h="h-[34.8px]"><Sm>{Rr.c3}</Sm></Rt><Rt h="h-[34.8px]"><Sm>{Rr.c4}</Sm></Rt><Rt h="h-[34.8px]"><Sm>{Rr.c5}</Sm></Rt><Vr h="h-[16px]" />
            <Rt active h="h-[33px]"><Snap /></Rt><div className="h-[1px]" /><Rt active h="h-[34px]"><Sm>{Rr.b1}</Sm></Rt><Rt><Sm>{Rr.b2}</Sm></Rt>
            <div className="w-[35px] flex justify-center mt-[31px]"><svg width="6" height="11" viewBox="0 0 6 11"><path d="M0 0l6 5.500L0 11z" fill="#2e3436" /></svg></div>
          </div>
        </div>

        {/* palette */}
        <div className="h-[21px] shrink-0 flex pt-[1px]">
          <div className="flex-1 flex overflow-hidden min-w-0">
            <svg width="20" height="20" viewBox="0 0 20 20" className="shrink-0"><rect width="20" height="20" fill="#fff" /><path d="M0 0l20 20M20 0L0 20" stroke="#800000" strokeWidth="1.500" /></svg>
            {GRAYS.map((c, i) => <div key={i} className="h-[19px] w-[19px] shrink-0" style={{ background: c }} />)}
          </div>
          <div className="w-[37px] shrink-0 flex justify-center items-end"><svg width="6" height="11" viewBox="0 0 6 11" className="relative top-[3px]"><path d="M6 0L0 5.500 6 11z" fill="#2e3436" /></svg></div>
        </div>
        <div className="h-[14px] shrink-0 flex">
          <div className="flex-1 bg-[#cdcdcd] flex items-center pl-[3px]"><div className="w-[135px] h-[8px] rounded-full bg-[#7f8484]" /></div>
          <div className="w-[37px] shrink-0" />
        </div>

        {/* status bar */}
        <div className="flex-1 flex items-center min-h-0">
          <div className="w-[152px] shrink-0 grid grid-cols-[47px_1fr] gap-x-[28px] leading-[19px] text-[#3a4042]">
            <span className="text-right">Fill:</span><span>N/A</span>
            <span className="text-right">Stroke:</span><span>N/A</span>
          </div>
          <span className="ml-[6px] w-[18px] shrink-0 text-[#3a4042]">O:</span>
          <Spin v="100" w="w-[62px]" btn="w-[15px]" disabled />
          <div className="ml-[8px] w-px h-[36px] bg-[#dcd9d5]" />
          <div className="ml-[13px]">{E1.eye}</div>
          <div className="ml-[16px]"><Lock open /></div>
          <div className="ml-[9px] w-[87px] h-[37px] rounded-[5px] border border-[#cdc7c2] bg-[#f0efed] flex items-center justify-center gap-[5px] text-[12.5px] font-medium">•Layer 1 <Tri /></div>
          <div className="ml-[29px] w-[293px] shrink-0 leading-[19px] text-[#3a4042]"><b>Alt</b>: Select with touch-path, Cycle through objects, Forced Drag</div>
          <div className="w-px h-[36px] bg-[#dcd9d5]" />
          <div className="ml-[13px] w-[70px] shrink-0 grid grid-cols-[29px_1fr] leading-[19px] text-[#3a4042] text-[15px]">
            <span>X:</span><span>31.87</span><span>Y:</span><span>30.30</span>
          </div>
          <span className="ml-[9px] w-[24px] shrink-0 text-[#3a4042] text-[15px]">Z:</span>
          <Spin v="444%" w="w-[104px]" btn="w-[21px]" txt="text-[16px] pl-[6px]" />
          <span className="ml-[10px] w-[24px] shrink-0 text-[#3a4042] text-[15px]">R:</span>
          <Spin v="0.00°" w="w-[114px]" btn="w-[21px]" txt="text-[16px] pl-[12px]" />
        </div>
      </div>
    </div>
  );
}
